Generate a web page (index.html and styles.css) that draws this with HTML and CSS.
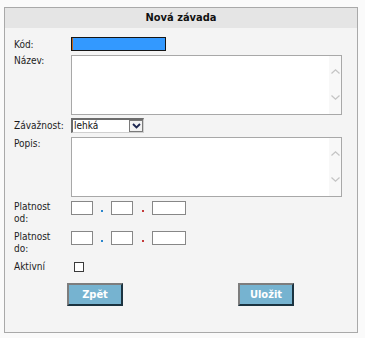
FILE: index.html
```html
<!DOCTYPE html>
<html lang="cs">
<head>
<meta charset="utf-8">
<title>Nová závada</title>
<link rel="stylesheet" href="styles.css">
</head>
<body>
<div class="panel">
  <div class="head">Nová závada</div>
  <div class="form">
    <div class="row r-kod">
      <label class="lbl l-kod">Kód:</label>
      <div class="kod"></div>
    </div>
    <div class="row r-nazev">
      <label class="lbl l-nazev">Název:</label>
      <div class="ta">
        <textarea class="ta-in"></textarea>
        <div class="sb">
          <svg width="9" height="5" viewBox="0 0 9 5"><path d="M0.5 4.5 L4.5 0.8 L8.5 4.5" fill="none" stroke="#c4c4c4" stroke-width="1.2"/></svg>
          <svg width="9" height="5" viewBox="0 0 9 5"><path d="M0.5 0.5 L4.5 4.2 L8.5 0.5" fill="none" stroke="#c4c4c4" stroke-width="1.2"/></svg>
        </div>
      </div>
    </div>
    <div class="row r-zav">
      <label class="lbl l-zav">Závažnost:</label>
      <div class="sel">
        <span class="sel-val">lehká</span>
        <span class="sel-btn"><svg width="9" height="6" viewBox="0 0 9 6"><path d="M1 1 L4.5 4.5 L8 1" fill="none" stroke="#1b2550" stroke-width="1.8"/></svg></span>
      </div>
    </div>
    <div class="row r-popis">
      <label class="lbl l-popis">Popis:</label>
      <div class="ta">
        <textarea class="ta-in"></textarea>
        <div class="sb">
          <svg width="9" height="5" viewBox="0 0 9 5"><path d="M0.5 4.5 L4.5 0.8 L8.5 4.5" fill="none" stroke="#c4c4c4" stroke-width="1.2"/></svg>
          <svg width="9" height="5" viewBox="0 0 9 5"><path d="M0.5 0.5 L4.5 4.2 L8.5 0.5" fill="none" stroke="#c4c4c4" stroke-width="1.2"/></svg>
        </div>
      </div>
    </div>
    <div class="row r-od">
      <label class="lbl l-date">Platnost<br>od:</label>
      <div class="date">
        <span class="din d-short"></span>
        <span class="sep s1"><span class="dot dot-b"></span></span>
        <span class="din d-short"></span>
        <span class="sep s2"><span class="dot dot-r"></span></span>
        <span class="din d-long"></span>
      </div>
    </div>
    <div class="row r-do">
      <label class="lbl l-date">Platnost<br>do:</label>
      <div class="date">
        <span class="din d-short"></span>
        <span class="sep s1"><span class="dot dot-b"></span></span>
        <span class="din d-short"></span>
        <span class="sep s2"><span class="dot dot-r"></span></span>
        <span class="din d-long"></span>
      </div>
    </div>
    <div class="row r-akt">
      <label class="lbl l-akt">Aktivní</label>
      <span class="chk"></span>
    </div>
    <div class="btns">
      <button class="btn">Zpět</button>
      <button class="btn">Uložit</button>
    </div>
  </div>
</div>
</body>
</html>
```
FILE: styles.css
```css
* { box-sizing: border-box; }
html, body { margin: 0; padding: 0; }
body {
  background: #fafafa;
  font-family: "DejaVu Sans Condensed", "DejaVu Sans", sans-serif;
  font-stretch: condensed;
  color: #1c1c1c;
}
.panel {
  margin: 7px 0 0 4px;
  width: 354px;
  height: 326px;
  border: 1px solid #a9a9a9;
  background: #f4f4f4;
}
.head {
  height: 20px;
  line-height: 20px;
  background: #e5e5e5;
  text-align: center;
  font-weight: bold;
  font-size: 11px;
  color: #111;
}
.form { padding-left: 9px; }
.row { display: flex; align-items: flex-start; }
.lbl {
  width: 57px;
  flex: none;
  font-size: 10px;
  line-height: 12px;
}
.r-kod { margin-top: 9px; height: 14px; }
.r-nazev { margin-top: 4px; height: 60px; }
.r-zav { margin-top: 3px; height: 15px; }
.r-popis { margin-top: 4px; height: 60px; }
.r-od { margin-top: 4px; height: 24px; }
.r-do { margin-top: 6px; height: 24px; }
.r-akt { margin-top: 7px; height: 10px; }
.l-kod { padding-top: 2px; }
.l-nazev { padding-top: 0; }
.l-zav { padding-top: 2px; }
.l-popis { padding-top: 1px; }
.l-akt { line-height: 10px; }

.kod {
  width: 95px;
  height: 14px;
  border: 1px solid #151515;
  background: #3399ff;
  box-shadow: inset 1px 0 0 #c0651c;
}
.ta {
  width: 271px;
  height: 60px;
  border: 1px solid #a8a8a8;
  background: #fff;
  display: flex;
}
.ta-in {
  flex: 1;
  border: 0;
  margin: 0;
  padding: 0;
  resize: none;
  background: #fff;
  outline: none;
}
.sb {
  width: 12px;
  background: #f8f8f8;
  display: flex;
  flex-direction: column;
  justify-content: space-between;
  align-items: center;
  padding: 13px 0 14px;
}
.sb svg { display: block; }
.sel {
  width: 73px;
  height: 15px;
  border-style: solid;
  border-width: 2px 1px 1px 2px;
  border-color: #6c6c6c #d0d0d0 #d0d0d0 #6c6c6c;
  background: #fff;
  display: flex;
  align-items: flex-start;
}
.sel-val {
  font-size: 10px;
  line-height: 11px;
  padding-left: 1px;
  color: #111;
}
.sel-btn {
  margin-left: auto;
  width: 14px;
  height: 12px;
  border: 1px solid #7a7a7a;
  background: #f2f2f2;
  display: flex;
  align-items: center;
  justify-content: center;
}
.sel-btn svg { display: block; }
.date { display: flex; align-items: flex-start; }
.din {
  height: 14px;
  border: 1px solid #878787;
  background: #fff;
}
.d-short { width: 22px; }
.d-long { width: 34px; }
.sep { display: flex; justify-content: center; height: 14px; }
.s1 { width: 18px; }
.s2 { width: 19px; }
.dot { width: 2px; height: 2px; margin-top: 9px; }
.dot-b { background: #2b86cc; }
.dot-r { background: #c43a3a; }
.chk {
  width: 10px;
  height: 10px;
  margin-left: 3px;
  border: 1px solid #3a3a3a;
  background: #fff;
}
.btns {
  display: flex;
  margin-top: 11px;
  padding-left: 53px;
  gap: 115px;
}
.btn {
  width: 56px;
  height: 23px;
  margin: 0;
  padding: 0;
  border-style: solid;
  border-width: 2px;
  border-color: #7d7d7d #1b3340 #1b3340 #7d7d7d;
  background: #76b3d0;
  color: #fff;
  font-family: "DejaVu Sans Condensed", "DejaVu Sans", sans-serif;
  font-stretch: condensed;
  font-weight: bold;
  font-size: 11px;
}
```
